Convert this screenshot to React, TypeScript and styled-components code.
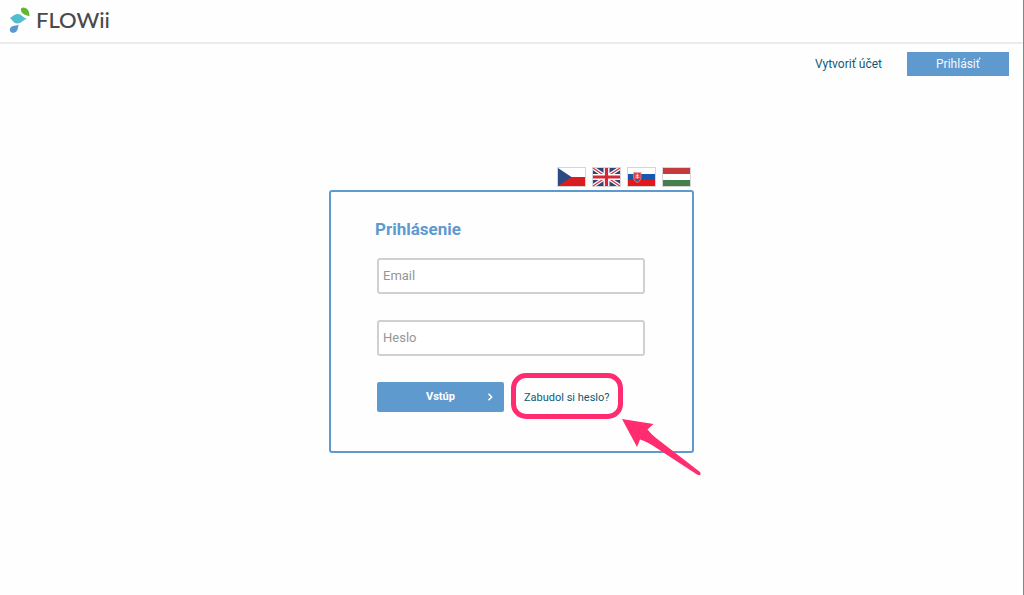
import React from "react";
import styled, { createGlobalStyle } from "styled-components";

const GlobalStyle = createGlobalStyle`
  * { box-sizing: border-box; }
  body {
    margin: 0;
    background: #fefefe;
    font-family: Roboto, "Liberation Sans", sans-serif;
    font-size: 12px;
    line-height: 16px;
    color: #0f5a78;
  }
`;

const Page = styled.div`
  min-height: 100vh;
  border-right: 1px solid #858585;
`;

const Header = styled.header`
  height: 44px;
  padding: 0 8px;
  border-bottom: 2px solid #ececec;
`;

const Brand = styled.a`
  display: flex;
  align-items: center;
  gap: 6px;
  height: 40px;
  width: max-content;
  color: #4a4a4a;
  font-family: Lato, sans-serif;
  font-size: 22px;
  font-weight: 500;
  line-height: 24px;
  text-decoration: none;
`;

const AccountNav = styled.nav`
  display: flex;
  align-items: center;
  justify-content: flex-end;
  gap: 25px;
  padding: 8px 14px 0;
`;

const TextLink = styled.a<{ $small?: boolean }>`
  color: #0f5a78;
  font-size: ${({ $small }) => ($small ? "11px" : "12px")};
  text-decoration: none;
`;

const SignInButton = styled.button`
  width: 102px;
  height: 24px;
  padding: 0;
  border: 0;
  background: #5f9acf;
  color: #f4f9fd;
  font: 12px/24px Roboto, sans-serif;
`;

const Main = styled.main`
  width: 365px;
  max-width: 100%;
  margin: 91px auto 0;
`;

const Languages = styled.div`
  display: flex;
  justify-content: flex-end;
  gap: 6px;
  padding: 0 3px 3px 0;
`;

const FlagButton = styled.button`
  display: block;
  width: 29px;
  height: 20px;
  padding: 0;
  border: 1px solid #d6d6d6;
  background: #fff;

  svg { display: block; width: 100%; height: 100%; }
`;

const Panel = styled.form`
  position: relative;
  padding: 26px 47px 39px 46px;
  border: 2px solid #5f9acf;
  border-radius: 3px;
`;

const Title = styled.h1`
  margin: 0 0 18px -2px;
  color: #5f9acf;
  font-size: 17px;
  font-weight: 700;
  line-height: 22px;
`;

const Field = styled.input`
  display: block;
  width: 100%;
  height: 36px;
  margin-bottom: 26px;
  padding: 0 4px 2px;
  border: 2px solid #d0d0d0;
  border-radius: 3px;
  background: #fff;
  color: #444;
  font: 13px/16px Roboto, sans-serif;
  outline: none;

  &::placeholder { color: #969696; opacity: 1; }
`;

const Actions = styled.div`
  display: flex;
  align-items: center;
  gap: 20px;
`;

const SubmitButton = styled.button`
  display: grid;
  grid-template-columns: 1fr auto 1fr;
  align-items: center;
  width: 127px;
  height: 30px;
  padding: 0 10px;
  border: 0;
  border-radius: 2px;
  background: #5f9acf;
  color: #fff;
  font: 700 11px/16px Roboto, sans-serif;

  span { grid-column: 2; }
  svg { justify-self: end; }
`;

const Highlighted = styled.div`
  position: relative;
`;

const Ring = styled.div`
  position: absolute;
  inset: -16px -13px -13px;
  border: 5px solid #ff2d6f;
  border-radius: 15px;
  pointer-events: none;
`;

const Arrow = styled.svg`
  position: absolute;
  top: 100%;
  left: 100%;
  margin: 13px 0 0 12px;
  pointer-events: none;
`;

const LogoMark = () => (
  <svg width="22" height="28" viewBox="0 0 22 28" aria-hidden="true">
    <path d="M13.300 2.200C14.500.8 18.400 1.400 20 4C21.200 6 21.400 8 21.500 10.300C19.500 9.700 16.800 9.300 14.800 7.500C13.100 5.900 12.300 3.600 13.300 2.200Z" fill="#62b634" />
    <path d="M1.600 12C4 11.500 5.500 8.300 9.500 8C13.500 7.800 14.600 11.700 18.900 12.800C15.600 13.600 14 17.300 9.300 17.400C4.800 17.400 4.600 13.300 1.600 12Z" fill="#55bccd" />
    <path d="M10.700 18.500C9.800 20.800 10.300 23.500 8.400 25.400C6.600 27.200 3.500 27.200 2.300 25.400C1.100 23.400 2.100 21.200 4.300 20.200C6.500 19.200 8.900 19.800 10.700 18.500Z" fill="#5b98d2" />
  </svg>
);

const CzechFlag = () => (
  <svg viewBox="0 0 27 18" preserveAspectRatio="none">
    <path fill="#fff" d="M0 0h27v9H0z" />
    <path fill="#db1c20" d="M0 9h27v9H0z" />
    <path fill="#2c4b82" d="M0 0l13.5 9L0 18z" />
  </svg>
);

const BritishFlag = () => (
  <svg viewBox="0 0 27 18" preserveAspectRatio="none">
    <path fill="#32437c" d="M0 0h27v18H0z" />
    <path stroke="#fff" strokeWidth="3.6" d="M0 0l27 18M27 0L0 18" />
    <path stroke="#d43a48" strokeWidth="1.3" d="M0 0l27 18M27 0L0 18" />
    <path stroke="#fff" strokeWidth="6" d="M13.5 0v18M0 9h27" />
    <path stroke="#d2283a" strokeWidth="3.2" d="M13.5 0v18M0 9h27" />
  </svg>
);

const SlovakFlag = () => (
  <svg viewBox="0 0 27 18" preserveAspectRatio="none">
    <path fill="#fff" d="M0 0h27v6H0z" />
    <path fill="#1558ae" d="M0 6h27v6H0z" />
    <path fill="#e0191f" d="M0 12h27v6H0z" />
    <path d="M5.5 4.5h7.500v5.2c0 2.3-1.6 3.8-3.700 4.8c-2.2-1-3.800-2.5-3.800-4.8z" fill="#e23b3f" stroke="#e9a0a6" strokeWidth=".6" />
    <path d="M9.3 5.6v6M7.8 7.3h3M7.2 9.2h4.200" stroke="#fff" strokeWidth=".7" />
    <path d="M7 11.8q2.300-2 4.600 0q-.8 1.2-2.3 2q-1.5-.8-2.3-2z" fill="#2e62aa" />
  </svg>
);

const HungarianFlag = () => (
  <svg viewBox="0 0 27 18" preserveAspectRatio="none">
    <path fill="#c23c3e" d="M0 0h27v6H0z" />
    <path fill="#fff" d="M0 6h27v6H0z" />
    <path fill="#43804e" d="M0 12h27v6H0z" />
  </svg>
);

const languages = [
  { name: "Čeština", Flag: CzechFlag },
  { name: "English", Flag: BritishFlag },
  { name: "Slovenčina", Flag: SlovakFlag },
  { name: "Magyar", Flag: HungarianFlag },
];

export default function App() {
  return (
    <Page>
      <GlobalStyle />
      <Header>
        <Brand href="#">
          <LogoMark />
          FLOWii
        </Brand>
      </Header>
      <AccountNav>
        <TextLink href="#">Vytvoriť účet</TextLink>
        <SignInButton type="button">Prihlásiť</SignInButton>
      </AccountNav>
      <Main>
        <Languages>
          {languages.map(({ name, Flag }) => (
            <FlagButton key={name} type="button" aria-label={name}>
              <Flag />
            </FlagButton>
          ))}
        </Languages>
        <Panel onSubmit={(e) => e.preventDefault()}>
          <Title>Prihlásenie</Title>
          <Field type="email" placeholder="Email" aria-label="Email" />
          <Field type="password" placeholder="Heslo" aria-label="Heslo" />
          <Actions>
            <SubmitButton type="submit">
              <span>Vstúp</span>
              <svg width="8" height="10" viewBox="0 0 8 10" aria-hidden="true">
                <path d="M2.500 1.800L5.700 5L2.500 8.200" fill="none" stroke="#fff" strokeWidth="1.500" />
              </svg>
            </SubmitButton>
            <Highlighted>
              <TextLink $small href="#">Zabudol si heslo?</TextLink>
              <Ring />
              <Arrow width="80" height="58" viewBox="0 0 80 58" aria-hidden="true">
                <path d="M0 0L31.500 5L25.500 10.500Q29 15 34 19L78 53Q79.500 55 78 56Q77 56.500 75 55.500L36 30Q26 23 18 20.500L15 28Z" fill="#ff2d6f" />
              </Arrow>
            </Highlighted>
          </Actions>
        </Panel>
      </Main>
    </Page>
  );
}
